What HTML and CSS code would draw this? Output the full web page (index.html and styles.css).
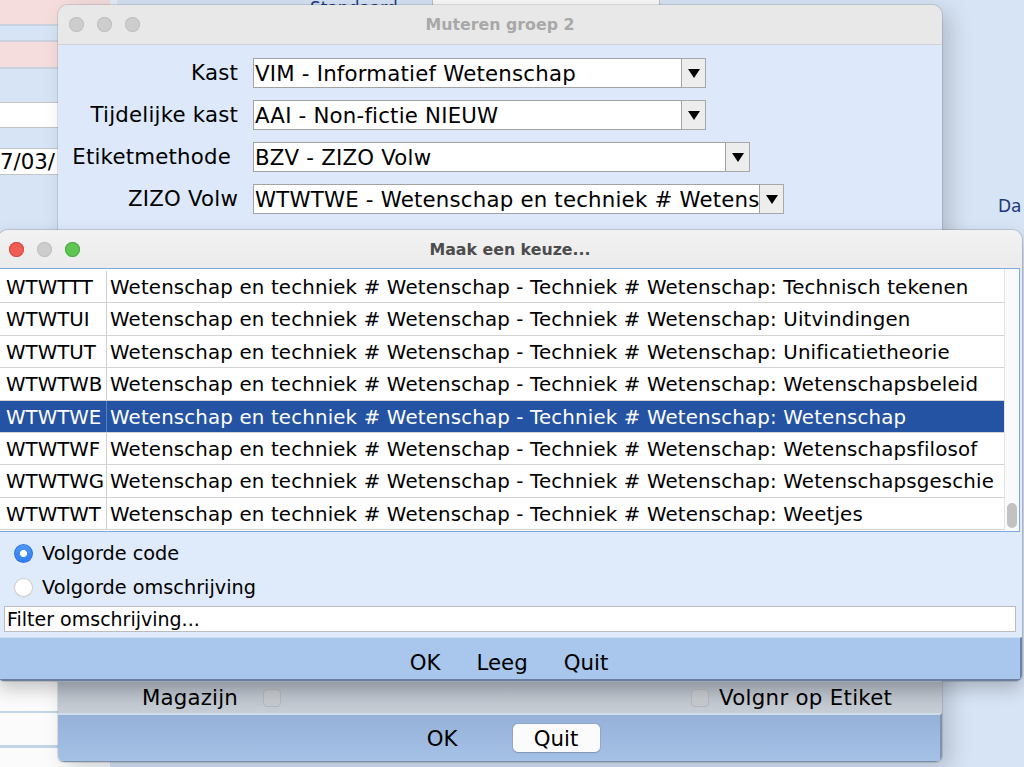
FILE: index.html
```html
<!DOCTYPE html>
<html lang="nl">
<head>
<meta charset="utf-8">
<title>Maak een keuze...</title>
<link rel="stylesheet" href="styles.css">
</head>
<body>
<div class="bgapp">
  <div class="bg-left">
    <div class="bg-row pink h24"></div>
    <div class="bg-line"></div>
    <div class="bg-row blue h14"></div>
    <div class="bg-line"></div>
    <div class="bg-row pink h25"></div>
    <div class="bg-line"></div>
    <div class="bg-row blue h33"></div>
    <div class="bg-input h26"></div>
    <div class="bg-row blue h20"></div>
    <div class="bg-input h27"><span class="bg-date">7/03/</span></div>
    <div class="bg-row blue fill"></div>
    <div class="bg-row white h31"></div>
    <div class="bg-line blueline"></div>
    <div class="bg-row white h32"></div>
    <div class="bg-line blueline h3"></div>
    <div class="bg-row white fillend"></div>
  </div>
  <div class="bg-mid">
    <div class="bg-head">
      <div class="bg-head-gap"></div>
      <div class="bg-tab"><span class="bg-tab-text">Standaard</span></div>
      <div class="bg-head-white"></div>
    </div>
  </div>
  <div class="bg-right"><span class="bg-da">Da</span></div>
</div>

<div class="win win-main">
  <div class="titlebar inactive">
    <div class="lights">
      <span class="light off"></span><span class="light off"></span><span class="light off"></span>
    </div>
    <div class="title">Muteren groep 2</div>
    <div></div>
  </div>
  <div class="main-body">
    <div class="form">
      <div class="lbl">Kast</div>
      <div class="combo w453">
        <div class="combo-field">VIM - Informatief Wetenschap</div>
        <div class="combo-btn"><svg width="12" height="9" viewBox="0 0 12 9"><polygon points="0,0 12,0 6,9" fill="#000"/></svg></div>
      </div>
      <div class="lbl">Tijdelijke kast</div>
      <div class="combo w453">
        <div class="combo-field">AAI - Non-fictie NIEUW</div>
        <div class="combo-btn"><svg width="12" height="9" viewBox="0 0 12 9"><polygon points="0,0 12,0 6,9" fill="#000"/></svg></div>
      </div>
      <div class="lbl lbl-inset">Etiketmethode</div>
      <div class="combo w497">
        <div class="combo-field">BZV - ZIZO Volw</div>
        <div class="combo-btn"><svg width="12" height="9" viewBox="0 0 12 9"><polygon points="0,0 12,0 6,9" fill="#000"/></svg></div>
      </div>
      <div class="lbl">ZIZO Volw</div>
      <div class="combo w531">
        <div class="combo-field">WTWTWE - Wetenschap en techniek # Wetensc</div>
        <div class="combo-btn"><svg width="12" height="9" viewBox="0 0 12 9"><polygon points="0,0 12,0 6,9" fill="#000"/></svg></div>
      </div>
    </div>
    <div class="check-band">
      <div class="lbl">Magazijn</div>
      <div class="check-line">
        <span class="checkbox"></span>
        <span class="check-group"><span class="checkbox"></span><span class="check-text">Volgnr op Etiket</span></span>
      </div>
    </div>
  </div>
  <div class="btnbar main-bar">
    <span class="btn plain">OK</span>
    <span class="btn push">Quit</span>
  </div>
</div>

<div class="win win-pick">
  <div class="titlebar active">
    <div class="lights">
      <span class="light red"></span><span class="light off"></span><span class="light green"></span>
    </div>
    <div class="title">Maak een keuze...</div>
    <div></div>
  </div>
  <div class="pane">
    <div class="tbl">
      <div class="tr"><div class="td code">WTWTTT</div><div class="td desc">Wetenschap en techniek # Wetenschap - Techniek # Wetenschap: Technisch tekenen</div></div>
      <div class="tr"><div class="td code">WTWTUI</div><div class="td desc">Wetenschap en techniek # Wetenschap - Techniek # Wetenschap: Uitvindingen</div></div>
      <div class="tr"><div class="td code">WTWTUT</div><div class="td desc">Wetenschap en techniek # Wetenschap - Techniek # Wetenschap: Unificatietheorie</div></div>
      <div class="tr"><div class="td code">WTWTWB</div><div class="td desc">Wetenschap en techniek # Wetenschap - Techniek # Wetenschap: Wetenschapsbeleid</div></div>
      <div class="tr sel"><div class="td code">WTWTWE</div><div class="td desc">Wetenschap en techniek # Wetenschap - Techniek # Wetenschap: Wetenschap</div></div>
      <div class="tr"><div class="td code">WTWTWF</div><div class="td desc">Wetenschap en techniek # Wetenschap - Techniek # Wetenschap: Wetenschapsfilosof</div></div>
      <div class="tr"><div class="td code">WTWTWG</div><div class="td desc">Wetenschap en techniek # Wetenschap - Techniek # Wetenschap: Wetenschapsgeschie</div></div>
      <div class="tr"><div class="td code">WTWTWT</div><div class="td desc">Wetenschap en techniek # Wetenschap - Techniek # Wetenschap: Weetjes</div></div>
    </div>
    <div class="vscroll"><div class="thumb"></div></div>
  </div>
  <div class="pick-body">
    <div class="radio-row"><span class="radio on"></span><span>Volgorde code</span></div>
    <div class="radio-row"><span class="radio"></span><span>Volgorde omschrijving</span></div>
    <div class="filter">Filter omschrijving...</div>
  </div>
  <div class="btnbar pick-bar">
    <span class="btn plain">OK</span>
    <span class="btn plain">Leeg</span>
    <span class="btn plain">Quit</span>
  </div>
</div>
</body>
</html>
```

FILE: styles.css
```css
* { box-sizing: border-box; }
html, body { margin: 0; padding: 0; }
body {
  width: 1024px;
  height: 767px;
  overflow: hidden;
  position: relative;
  font-family: "DejaVu Sans", "Noto Sans", sans-serif;
  color: #000;
  background: #d7e4f5;
}

/* ---------- background application window ---------- */
.bgapp { position: absolute; inset: 0; display: flex; }
.bg-left { width: 110px; display: flex; flex-direction: column; }
.bg-row { width: 100%; }
.pink { background: #f5dcdd; }
.blue { background: #d6e4f6; }
.white { background: #fbfbfb; }
.h14 { height: 14px; } .h20 { height: 20px; } .h24 { height: 24px; } .h25 { height: 25px; }
.h26 { height: 26px; } .h27 { height: 27px; } .h31 { height: 31px; } .h32 { height: 32px; } .h33 { height: 33px; }
.bg-line { height: 2px; background: #c9d2de; }
.bg-line.blueline { background: #c3d3e8; }
.bg-line.h3 { height: 3px; }
.fill { flex: 1; }
.fillend { height: 19px; }
.bg-input { width: 58px; background: #fff; border-top: 1px solid #c4c4c4; border-bottom: 1px solid #c4c4c4; overflow: hidden; white-space: nowrap; }
.bg-date { display: block; font-size: 21.3px; line-height: 25px; padding-left: 0; }
.bg-mid { flex: 1; }
.bg-head { display: flex; height: 24px; }
.bg-head-gap { width: 7px; background: #e6edf7; }
.bg-tab { width: 315px; background: #d5e3f6; overflow: hidden; display: flex; padding-left: 193px; }
.bg-tab-text { color: #1f3a7c; font-size: 17px; line-height: 18px; margin-top: -1px; white-space: nowrap; }
.bg-head-white { width: 228px; background: #fafafa; border-left: 1px solid #bdbdbd; border-right: 1px solid #bdbdbd; }
.bg-right { width: 26px; overflow: hidden; }
.bg-da { display: block; margin-top: 196px; color: #1f3a7c; font-size: 17px; white-space: nowrap; }

/* ---------- windows ---------- */
.win { position: absolute; display: flex; flex-direction: column; overflow: hidden; }
.win-main {
  left: 58px; top: 5px; width: 884px; height: 757px;
  background: #dde9fa;
  border-radius: 10px 10px 6px 6px;
  box-shadow: 0 0 0 1px rgba(0,0,0,0.10), 8px 6px 22px rgba(0,0,0,0.18);
  z-index: 1;
}
.win-pick {
  left: -2px; top: 230px; width: 1024px; height: 451px;
  background: #dfeafb;
  border-radius: 10px 10px 6px 6px;
  box-shadow: 0 0 0 1px rgba(0,0,0,0.12), 0 8px 18px rgba(0,0,0,0.22);
  z-index: 2;
}

.titlebar {
  display: grid;
  grid-template-columns: 1fr auto 1fr;
  align-items: center;
  flex: none;
}
.titlebar.inactive { height: 40px; background: #e8e8e8; border-bottom: 1px solid #d2d2d2; }
.titlebar.active { height: 38px; background: linear-gradient(#f2f2f2, #ebebeb); }
.lights { display: flex; gap: 13px; padding-left: 11px; }
.light { width: 15px; height: 15px; border-radius: 50%; }
.light.off { background: #cdcdcd; box-shadow: inset 0 0 0 1px #c0c0c0; }
.light.red { background: #ee5e56; box-shadow: inset 0 0 0 1px #d9473f; }
.light.green { background: #5fc553; box-shadow: inset 0 0 0 1px #4aad3f; }
.title { font-weight: bold; font-size: 15.8px; white-space: nowrap; }
.inactive .title { color: #a8a8a8; }
.active .title { color: #4c4c4c; }

/* ---------- main dialog ---------- */
.main-body { flex: 1; display: flex; flex-direction: column; }
.form {
  display: grid;
  grid-template-columns: 180px 1fr;
  column-gap: 15px;
  row-gap: 12px;
  padding-top: 13px;
  grid-auto-rows: 30px;
}
.lbl { text-align: right; font-size: 21.3px; line-height: 30px; white-space: nowrap; letter-spacing: 0.2px; }
.lbl-inset { padding-right: 7px; }
.combo { display: flex; height: 30px; }
.w453 { width: 453px; } .w497 { width: 497px; } .w531 { width: 531px; }
.combo-field {
  flex: 1; min-width: 0;
  background: #fff;
  border: 1px solid #a3a3a3;
  font-size: 21.3px; line-height: 29px;
  padding-left: 1px;
  letter-spacing: 0.2px;
  white-space: nowrap; overflow: hidden;
}
.combo-btn {
  width: 24px; flex: none;
  background: #ededed;
  border: 1px solid #a8a8a8; border-left: none;
  display: flex; align-items: center; justify-content: center;
}

.check-band {
  margin-top: auto;
  height: 31px;
  display: grid;
  grid-template-columns: 180px 1fr;
  column-gap: 15px;
  align-items: center;
  background: linear-gradient(#b5bcc6, #c7cdd5);
}
.check-band .lbl { line-height: 31px; }
.check-line { display: flex; align-items: center; padding-left: 10px; }
.checkbox {
  width: 18px; height: 18px; border-radius: 4px;
  background: #c5c8cc; border: 1px solid #b3b6bb; flex: none;
}
.check-group { display: flex; align-items: center; margin-left: 410px; }
.check-text { margin-left: 10px; font-size: 21.3px; white-space: nowrap; letter-spacing: 0.3px; }

.btnbar { display: flex; align-items: center; justify-content: center; flex: none; }
.main-bar {
  height: 49px; gap: 27px;
  background: linear-gradient(#95b1d8, #a6c1e6);
  border-top: 2px solid #cfdce9;
  border-right: 2px solid #7f93ad;
  border-bottom: 1px solid #7d90a8;
}
.btn { font-size: 21.3px; white-space: nowrap; }
.btn.plain { padding: 0; }
.main-bar .btn { width: 87px; height: 28px; display: flex; align-items: center; justify-content: center; border-radius: 5px; }
.btn.push { background: #fbfbfb; box-shadow: 0 0 0 1px rgba(0,0,0,0.08), 0 1px 1px rgba(0,0,0,0.15); }

/* ---------- pick dialog ---------- */
.pane {
  height: 264px; flex: none;
  display: flex;
  border: 1px solid #7ea7e1;
  margin-right: 2px;
  background: #fff;
}
.tbl { flex: 1; padding-top: 2px; background: #fff; }
.tr {
  display: flex; height: 32.4px;
  border-bottom: 1px solid #d3d3d3;
  font-size: 19.8px;
}
.td { white-space: nowrap; overflow: hidden; line-height: 29px; padding-top: 2px; }
.td.code { width: 108px; flex: none; padding-left: 7px; border-right: 1px solid #cfcfcf; }
.td.desc { flex: 1; padding-left: 3px; letter-spacing: 0.16px; }
.tr.sel { background: #2553a3; color: #fff; }
.tr.sel .td.code { border-right-color: #5a7fbf; }
.vscroll {
  width: 15px; flex: none;
  background: #fafafa;
  border-left: 1px solid #e3e3e3;
  display: flex; flex-direction: column; justify-content: flex-end;
  align-items: center;
  padding-bottom: 3px;
}
.thumb { width: 10px; height: 25px; border-radius: 5px; background: #c2c2c2; }

.pick-body { flex: 1; padding: 4px 6px 5px 6px; display: flex; flex-direction: column; }
.radio-row { height: 34px; display: flex; align-items: center; padding-left: 10px; font-size: 19.3px; white-space: nowrap; }
.radio {
  width: 19px; height: 19px; border-radius: 50%; flex: none; margin-right: 9px;
  background: #fff; box-shadow: inset 0 0 0 1px #cbcbcb, 0 1px 1px rgba(0,0,0,0.06);
}
.radio.on {
  background: radial-gradient(circle, #fff 0 3.3px, transparent 3.8px), linear-gradient(#4f9bf9, #2f7cf0);
  box-shadow: inset 0 0 0 1px #2d74dc;
}
.filter {
  margin-top: 2px;
  height: 26px;
  background: #fff;
  border: 1px solid #bcbcbc;
  font-size: 19px; line-height: 24px;
  padding-left: 2px;
  white-space: nowrap;
}
.pick-bar {
  height: 44px; gap: 36px;
  padding-top: 8px;
  background: #a9c6ec;
  border-top: 1px solid #c9dcf4;
  border-right: 2px solid #6f84a3;
  border-bottom: 2px solid #6a7fa0;
}
```
